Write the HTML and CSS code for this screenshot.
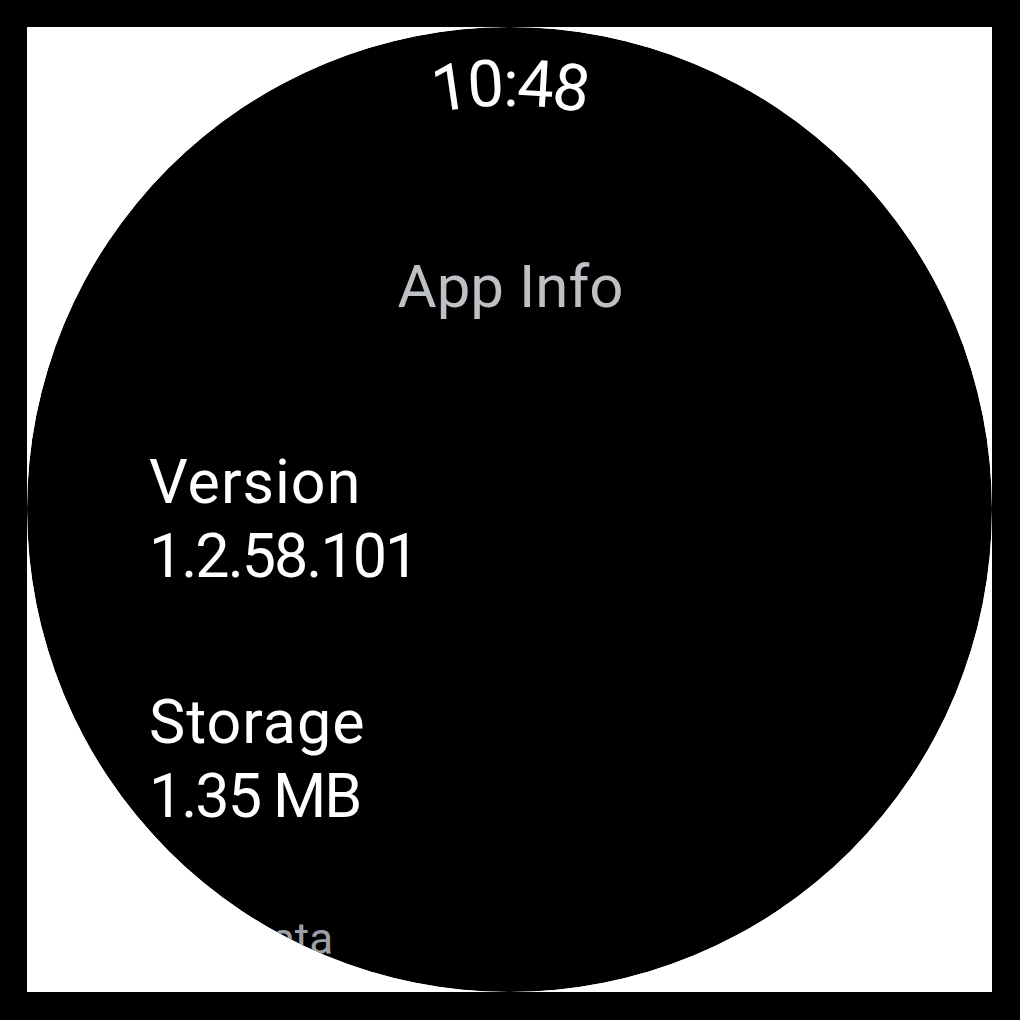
FILE: index.html
```html
<!DOCTYPE html>
<html lang="en">
<head>
<meta charset="utf-8">
<title>App Info</title>
<link rel="stylesheet" href="styles.css">
</head>
<body>
<div class="frame">
  <div class="screen">
    <svg class="time" width="965" height="140" viewBox="0 0 965 140">
      <defs>
        <path id="arc" d="M 282.25 132.7 A 397.5 397.5 0 0 1 682.75 132.7"/>
      </defs>
      <text class="time-text"><textPath href="#arc" startOffset="50%" text-anchor="middle">10:48</textPath></text>
    </svg>
    <h1 class="title">App Info</h1>
    <div class="list">
      <div class="item">
        <div class="label">Version</div>
        <div class="value">1.2.58.101</div>
      </div>
      <div class="item">
        <div class="label">Storage</div>
        <div class="value">1.35 MB</div>
      </div>
      <div class="item faded">
        <div class="label">Data</div>
      </div>
    </div>
  </div>
</div>
</body>
</html>
```

FILE: styles.css
```css
html, body {
  margin: 0;
  padding: 0;
  background: #000;
}
body {
  width: 1020px;
  height: 1020px;
  font-family: Roboto, "Liberation Sans", sans-serif;
}
.frame {
  padding: 27px 28px 28px 27px;
  box-sizing: border-box;
  width: 1020px;
  height: 1020px;
}
.screen {
  width: 965px;
  height: 965px;
  background: #000;
  border-radius: 50%;
  overflow: hidden;
  box-shadow: 0 0 0 300px #fff;
  clip-path: circle(50%);
  display: flex;
  flex-direction: column;
}
.frame {
  background: #fff;
  background-clip: content-box;
}
.time {
  display: block;
  flex: none;
}
.time-text {
  font-family: Roboto, "Liberation Sans", sans-serif;
  font-size: 65px;
  letter-spacing: -2.5px;
  fill: #fff;
}
.title {
  margin: 85px 0 0;
  font-size: 60px;
  line-height: 70px;
  font-weight: 400;
  color: #bdc1c6;
  text-align: center;
  padding-left: 2px;
}
.list {
  margin-top: 123px;
  display: flex;
  flex-direction: column;
  gap: 92px;
  padding-left: 122px;
}
.item {
  color: #fff;
  font-size: 61px;
  line-height: 74px;
}
.label {
  letter-spacing: 1px;
}
.value {
  letter-spacing: -2px;
}
.item.faded {
  margin-top: -11px;
  padding-left: 93px;
  font-size: 44px;
  line-height: 50px;
  color: #9aa0a6;
}
.item.faded .label {
  letter-spacing: 0;
}
```
